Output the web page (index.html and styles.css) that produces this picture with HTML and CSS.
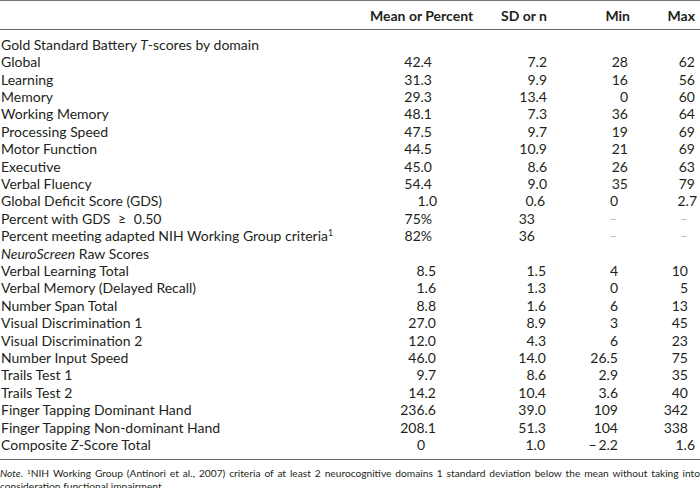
FILE: index.html
```html
<!DOCTYPE html>
<html>
<head>
<meta charset="utf-8">
<link rel="stylesheet" href="styles.css">
</head>
<body>
<table class="tbl">
  <colgroup>
    <col class="c-label"><col class="c-mean"><col class="c-sd"><col class="c-min"><col class="c-max">
  </colgroup>
  <thead>
    <tr>
      <th></th>
      <th class="h-mean">Mean or Percent</th>
      <th class="h-sd">SD or n</th>
      <th class="h-min">Min</th>
      <th class="h-max">Max</th>
    </tr>
  </thead>
  <tbody>
    <tr class="first"><td>Gold Standard Battery <i>T</i>-scores by domain</td><td></td><td></td><td></td><td></td></tr>
    <tr class="a"><td>Global</td><td>42.4</td><td>7.2</td><td>28</td><td>62</td></tr>
    <tr class="a"><td>Learning</td><td>31.3</td><td>9.9</td><td>16</td><td>56</td></tr>
    <tr class="a"><td>Memory</td><td>29.3</td><td>13.4</td><td>0</td><td>60</td></tr>
    <tr class="a"><td>Working Memory</td><td>48.1</td><td>7.3</td><td>36</td><td>64</td></tr>
    <tr class="a"><td>Processing Speed</td><td>47.5</td><td>9.7</td><td>19</td><td>69</td></tr>
    <tr class="a"><td>Motor Function</td><td>44.5</td><td>10.9</td><td>21</td><td>69</td></tr>
    <tr class="a"><td>Executive</td><td>45.0</td><td>8.6</td><td>26</td><td>63</td></tr>
    <tr class="a"><td>Verbal Fluency</td><td>54.4</td><td>9.0</td><td>35</td><td>79</td></tr>
    <tr class="gds"><td>Global Deficit Score (GDS)</td><td>1.0</td><td>0.6</td><td>0</td><td>2.7</td></tr>
    <tr class="pct"><td>Percent with GDS <span class="ge">≥</span> 0.50</td><td>75%</td><td>33</td><td class="dash">–</td><td class="dash">–</td></tr>
    <tr class="pct"><td>Percent meeting adapted NIH Working Group criteria<sup>1</sup></td><td>82%</td><td>36</td><td class="dash">–</td><td class="dash">–</td></tr>
    <tr><td><i>NeuroScreen</i> Raw Scores</td><td></td><td></td><td></td><td></td></tr>
    <tr class="b"><td>Verbal Learning Total</td><td>8.5</td><td>1.5</td><td>4</td><td>10</td></tr>
    <tr class="b"><td>Verbal Memory (Delayed Recall)</td><td>1.6</td><td>1.3</td><td>0</td><td>5</td></tr>
    <tr class="b"><td>Number Span Total</td><td>8.8</td><td>1.6</td><td>6</td><td>13</td></tr>
    <tr class="b"><td>Visual Discrimination 1</td><td>27.0</td><td>8.9</td><td>3</td><td>45</td></tr>
    <tr class="b"><td>Visual Discrimination 2</td><td>12.0</td><td>4.3</td><td>6</td><td>23</td></tr>
    <tr class="b"><td>Number Input Speed</td><td>46.0</td><td>14.0</td><td>26.5</td><td>75</td></tr>
    <tr class="b"><td>Trails Test 1</td><td>9.7</td><td>8.6</td><td>2.9</td><td>35</td></tr>
    <tr class="b"><td>Trails Test 2</td><td>14.2</td><td>10.4</td><td>3.6</td><td>40</td></tr>
    <tr class="b"><td>Finger Tapping Dominant Hand</td><td>236.6</td><td>39.0</td><td>109</td><td>342</td></tr>
    <tr class="b"><td>Finger Tapping Non-dominant Hand</td><td>208.1</td><td>51.3</td><td>104</td><td>338</td></tr>
    <tr class="comp"><td>Composite <i>Z</i>-Score Total</td><td>0</td><td>1.0</td><td>−&#8201;2.2</td><td>1.6</td></tr>
  </tbody>
</table>
<p class="note"><i>Note</i>. <sup>1</sup>NIH Working Group (Antinori et al., 2007) criteria of at least 2 neurocognitive domains 1 standard deviation below the mean without taking into consideration functional impairment</p>
</body>
</html>
```

FILE: styles.css
```css
html, body {
  margin: 0;
  padding: 0;
  background: #fff;
}
body {
  font-family: Lato, "Open Sans", sans-serif;
  color: #231f20;
  width: 700px;
}
.tbl {
  width: 700px;
  border-collapse: collapse;
  table-layout: fixed;
  font-size: 14px;
  border-top: 1px solid #777;
}
.c-label { width: 370px; }
.c-mean { width: 105px; }
.c-sd { width: 75px; }
.c-min { width: 82px; }
.c-max { width: 68px; }

.tbl thead th {
  height: 28px;
  padding: 0;
  font-weight: bold;
  text-align: right;
  white-space: nowrap;
  line-height: 17px;
  border-bottom: 1px solid #666;
  vertical-align: middle;
}
.tbl thead th.h-mean { padding-right: 3px; }
.tbl thead th.h-sd { padding-right: 3px; }
.tbl thead th.h-min { padding-right: 2px; }
.tbl thead th.h-max { padding-right: 5px; }

.tbl td {
  padding: 0;
  line-height: 17.4px;
  white-space: nowrap;
  text-align: right;
  vertical-align: top;
}
.tbl td:first-child {
  text-align: left;
  padding-left: 1px;
}
.tbl tr.first td { padding-top: 5.7px; }

/* section A */
.a td:nth-child(2) { padding-right: 43px; }
.a td:nth-child(3) { padding-right: 3px; }
.a td:nth-child(4) { padding-right: 4px; }
.a td:nth-child(5) { padding-right: 5px; }

.gds td:nth-child(2) { padding-right: 38px; }
.gds td:nth-child(3) { padding-right: 5px; }
.gds td:nth-child(4) { padding-right: 14px; }
.gds td:nth-child(5) { padding-right: 3px; }

.pct td:nth-child(2) { padding-right: 43px; }
.pct td:nth-child(3) { padding-right: 15px; }
.pct td:nth-child(4) { padding-right: 15px; }
.pct td:nth-child(5) { padding-right: 12px; }

/* section B */
.b td:nth-child(2) { padding-right: 39px; }
.b td:nth-child(3) { padding-right: 4px; }
.b td:nth-child(4) { padding-right: 14px; }
.b td:nth-child(5) { padding-right: 12px; }

.comp td:nth-child(2) { padding-right: 50px; }
.comp td:nth-child(3) { padding-right: 5px; }
.comp td:nth-child(4) { padding-right: 14px; }
.comp td:nth-child(5) { padding-right: 5px; }

.dash { color: #bbb; }
.ge { padding: 0 4px; }

sup {
  font-size: 0.62em;
  line-height: 0;
  vertical-align: 0.55em;
}
.note {
  margin: 6px 0 0 0;
  padding-top: 7px;
  border-top: 1px solid #666;
  font-size: 10.2px;
  line-height: 13px;
  text-align: justify;
}
```
